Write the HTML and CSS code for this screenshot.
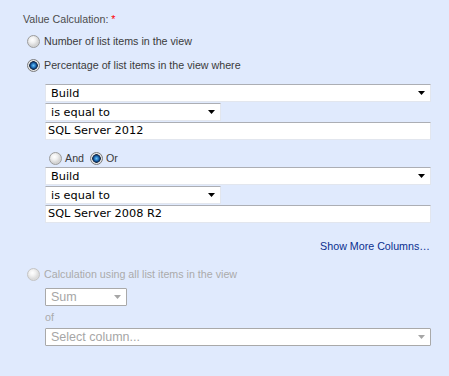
FILE: index.html
```html
<!DOCTYPE html>
<html lang="en">
<head>
  <meta charset="UTF-8">
  <title>Value Calculation</title>
  <link rel="stylesheet" href="styles.css">
</head>
<body>

<div class="field">
  <div class="title">Value Calculation: <span class="req">*</span></div>

  <div class="option"><span class="radio"></span><span>Number of list items in the view</span></div>
  <div class="option"><span class="radio checked"></span><span>Percentage of list items in the view where</span></div>

  <div class="filters">
    <div class="select wide"><span>Build</span><svg width="7" height="4" viewBox="0 0 7 4"><path d="M0 0H7L3.5 4Z"/></svg></div>
    <div class="select narrow"><span>is equal to</span><svg width="7" height="4" viewBox="0 0 7 4"><path d="M0 0H7L3.5 4Z"/></svg></div>
    <div class="textbox">SQL Server 2012</div>

    <div class="andor">
      <span class="radio small"></span><span>And</span>
      <span class="radio small checked"></span><span>Or</span>
    </div>

    <div class="select wide"><span>Build</span><svg width="7" height="4" viewBox="0 0 7 4"><path d="M0 0H7L3.5 4Z"/></svg></div>
    <div class="select narrow"><span>is equal to</span><svg width="7" height="4" viewBox="0 0 7 4"><path d="M0 0H7L3.5 4Z"/></svg></div>
    <div class="textbox">SQL Server 2008 R2</div>

    <div class="more"><a href="#">Show More Columns…</a></div>
  </div>

  <div class="option disabled"><span class="radio off"></span><span>Calculation using all list items in the view</span></div>

  <div class="calc">
    <div class="select sum off"><span>Sum</span><svg width="7" height="4" viewBox="0 0 7 4"><path d="M0 0H7L3.5 4Z"/></svg></div>
    <div class="of">of</div>
    <div class="select wide off"><span>Select column...</span><svg width="7" height="4" viewBox="0 0 7 4"><path d="M0 0H7L3.5 4Z"/></svg></div>
  </div>
</div>

</body>
</html>
```

FILE: styles.css
```css
body {
  margin: 0;
  background-color: #e0eafd;
  font-family: "Liberation Sans", Arial, sans-serif;
  font-size: 10.7px;
  color: #444;
}
.field {
  padding: 11px 0 0 23px;
}
.title {
  height: 16px;
  line-height: 16px;
  color: #4c4c4c;
}
.req {
  color: #ff0000;
}
.option {
  display: flex;
  align-items: center;
  gap: 4px;
  height: 24px;
  padding-left: 4px;
  color: #3b3b3b;
}
.option:nth-of-type(2) {
  margin-top: 2px;
}
.option.disabled {
  color: #ababab;
  margin-top: 10px;
}
.radio {
  width: 13px;
  height: 13px;
  border-radius: 50%;
  box-sizing: border-box;
  border: 1px solid #9c9c9c;
  background: radial-gradient(circle at 40% 35%, #ffffff 0, #f0f0f0 3px, #d4d4d4 6px);
  flex-shrink: 0;
}
.radio.checked {
  border-color: #7d7d7d;
  background: radial-gradient(circle at 50% 50%, #6ec2f2 0, #2b82cc 1.8px, #0d3f7a 3.2px, #1b2c44 4px, #f2f2f2 4.6px, #cfcfcf 6px);
}
.radio.off {
  border-color: #c4c4c4;
  background: radial-gradient(circle at 40% 35%, #ffffff 0, #f1f1f1 3px, #dcdcdc 6px);
}
.filters {
  margin: 7px 0 0 22px;
  width: 386px;
}
.select {
  display: flex;
  align-items: center;
  justify-content: space-between;
  box-sizing: border-box;
  height: 18px;
  padding: 0 5px 0 5px;
  background-color: #fff;
  border: 1px solid #e2e6ee;
  border-top-color: #acaeb4;
  font-family: "DejaVu Sans", Verdana, sans-serif;
  font-size: 11.3px;
  color: #000;
  margin-bottom: 1px;
}
.select svg {
  fill: #000;
}
.narrow {
  width: 176px;
}
.textbox {
  box-sizing: border-box;
  height: 18px;
  line-height: 16px;
  padding-left: 2px;
  margin-top: 1px;
  background-color: #fff;
  border: 1px solid #e2e6ee;
  border-top-color: #acaeb4;
  font-family: "DejaVu Sans", Verdana, sans-serif;
  font-size: 11.3px;
  color: #000;
}
.andor {
  display: flex;
  align-items: center;
  height: 16px;
  margin: 10px 0 1px 4px;
  gap: 3px;
  color: #3b3b3b;
}
.andor span:nth-child(3) {
  margin-left: 3px;
}
.more {
  text-align: right;
  margin-top: 17px;
  padding-right: 1px;
}
.more a {
  color: #0b2f8f;
  text-decoration: none;
}
.calc {
  margin: 2px 0 0 22px;
  width: 386px;
}
.select.off {
  border: 1px solid #a9a9a9;
  border-radius: 1px;
  color: #a6a6a6;
  font-family: "Liberation Sans", Arial, sans-serif;
  font-size: 12.5px;
}
.select.off svg {
  fill: #a6a6a6;
}
.sum {
  width: 82px;
}
.of {
  height: 21px;
  line-height: 21px;
  color: #ababab;
}
```
